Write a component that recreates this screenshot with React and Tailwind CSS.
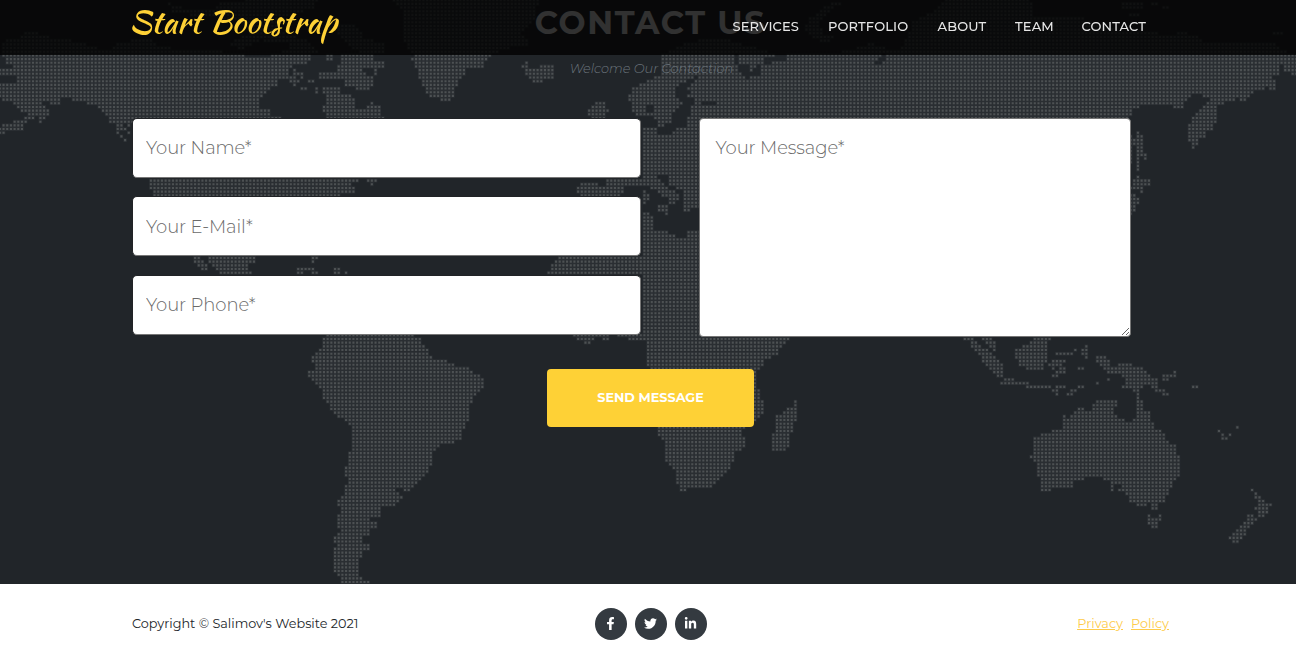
import React from "react";
import { FaFacebookF, FaTwitter, FaLinkedinIn } from "react-icons/fa";

// The dotted map is kept as sheets. Every sheet has an origin in pixels and
// outlines drawn at three units per pixel.
const SHEETS = [
  {
    o: [0, 0],
    land: [
      "0,125 30,120 60,118 75,98 100,96 140,105 150,118 215,122 240,130 290,140 300,152 335,152 345,130 375,125 400,118 450,120 480,140 560,150 640,145 700,165 800,168 860,150 930,165 935,180 918,193 865,196 868,235 832,240 830,255 808,262 808,272 785,285 778,300 778,325 808,330 812,345 845,350 845,362 400,362 398,372 388,385 384,372 325,370 325,350 305,335 290,318 262,310 258,300 212,302 205,290 180,293 180,314 150,314 140,303 125,315 148,325 148,345 136,352 124,370 115,368 115,350 85,357 75,368 50,372 72,372 70,392 15,394 15,404 -9,404 -9,385 15,372 45,362 80,350 82,338 65,333 60,322 40,318 35,308 5,302 0,290 -9,290 -9,252 50,248 50,232 25,228 -9,228 -9,205 40,205 38,193 22,193 20,182 0,165",
      "1180,0 1210,30 1215,130 1240,165 1235,180 1250,215 1265,255 1280,280 1296,292 1340,303 1361,290 1371,255 1391,225 1401,205 1426,203 1446,200 1476,165 1536,140 1596,130 1566,100 1606,60 1616,0",
      "1022,160 1120,160 1125,182 1155,183 1152,205 1135,205 1125,225 1112,205 1090,200 1085,215 1115,228 1120,255 1100,270 1068,270 1068,258 1035,258 1032,240 955,238 955,218 1010,215 1012,195 1022,190",
      "964,260 1015,260 1020,275 1050,284 1064,298 1065,325 1100,322 1112,305 1120,314 1142,318 1142,345 1155,348 1152,360 978,360 978,340 968,335 964,318 980,308 978,285 968,278",
      "448,535 1078,535 1075,547 1055,550 1068,568 1065,580 1022,580 1020,592 460,592 458,572 448,568",
      "490,0 560,30 640,25 660,10 740,0 950,0 945,25 880,40 830,70 860,100 930,125 960,158 880,158 860,130 780,120 720,150 690,130 760,90 700,60 600,50 520,35",
      "1000,80 1060,70 1090,110 1150,130 1160,158 1080,158 1040,130",
    ],
    runs: [
      [353, 364, 376], [386, 386, 376], [353, 375, 387], [353, 353, 398], [386, 386, 398], [364, 364, 409], [375, 375, 420],
      [980, 993, 167], [980, 993, 177], [870, 870, 199], [881, 881, 210], [886, 908, 221], [870, 881, 232], [903, 903, 232],
      [870, 892, 243], [925, 936, 243], [881, 881, 255], [904, 915, 266], [949, 949, 266], [949, 949, 277],
      [1104, 1126, 541], [1115, 1115, 552],
    ],
  },
  {
    o: [0, 160],
    land: [
      "580,288 600,288 600,300 612,300 622,318 620,332 612,332 592,320 580,308",
      "625,288 768,288 768,308 745,310 745,328 756,335 756,345 658,345 648,330 635,318 625,308",
    ],
    runs: [
      [938, 949, 294], [938, 938, 305], [893, 938, 327], [893, 904, 338], [938, 949, 338], [1004, 1015, 327], [1004, 1015, 338], [1037, 1037, 338],
    ],
  },
  {
    o: [290, 330],
    land: [
      "108,12 372,12 375,20 395,22 395,42 405,45 418,56 414,72 430,78 432,88 470,88 475,98 495,100 497,110 540,112 548,128 570,133 585,145 582,174 572,185 560,197 548,205 545,218 537,225 537,272 527,280 525,295 515,300 515,328 495,332 490,342 450,342 445,354 430,360 428,405 417,410 415,430 400,440 390,455 370,470 360,485 340,485 335,474 320,476 322,487 340,500 325,518 315,528 272,530 272,560 240,563 245,572 262,576 255,594 240,598 240,617 218,618 218,640 240,642 240,660 218,662 215,684 200,692 207,706 205,740 218,743 240,752 240,768 165,768 150,748 140,735 130,715 130,652 142,650 140,642 130,638 130,620 140,608 152,606 150,596 140,592 140,555 152,550 152,535 140,528 140,508 162,492 162,465 175,460 173,448 163,438 163,408 175,405 175,365 186,360 185,292 170,278 150,262 130,250 118,240 118,222 97,210 97,180 80,168 62,152 53,140 53,122 75,120 75,98 64,95 64,76 80,62 95,50 100,40 97,25",
    ],
  },
  {
    o: [432, 0],
    land: [
      "267,193 280,182 288,186 292,202 315,205 318,193 360,193 367,210 365,235 340,238 318,250 300,245 285,230 280,212 267,204",
      "466,325 488,318 490,304 520,304 520,322 532,328 518,340 518,356 478,356 466,345",
      "690,165 730,145 760,130 810,118 860,112 900,122 950,140 1000,150 1020,160 1060,165 1090,160 1130,165 1200,160 1260,150 1316,130 1356,140 1376,155 1406,150 1446,60 1506,30 1536,0 1796,0 1806,50 1856,55 1956,55 1996,75 2056,90 2146,92 2196,105 2256,95 2296,110 2326,130 2396,125 2476,125 2526,130 2556,150 2600,168 2600,225 2580,222 2576,212 2558,215 2554,198 2545,198 2541,222 2524,228 2524,238 2533,243 2532,270 2510,270 2505,262 2498,272 2468,272 2464,282 2451,292 2446,303 2426,303 2414,292 2399,304 2378,305 2375,315 2356,318 2355,368 2344,375 2342,392 2321,398 2320,412 2299,420 2297,435 2284,448 2278,432 2268,422 2268,373 2279,368 2279,350 2290,340 2302,325 2314,318 2325,305 2336,296 2350,292 2312,293 2310,280 2281,283 2264,298 2257,325 2224,325 2220,312 2190,317 2126,315 2124,325 2102,325 2096,345 2086,350 2086,362 805,362 805,648 626,648 626,345 612,348 598,332 598,305 588,300 588,284 602,262 640,246 655,235 685,220 685,190",
      "1120,95 1125,60 1160,40 1180,15 1240,0 1210,20 1160,70 1180,110 1210,110 1185,130 1140,110",
    ],
    water: [
      "735,262 745,248 762,250 765,270 772,275 765,290 785,298 788,312 775,320 778,345 765,352 765,378 740,380 722,395 705,402 675,402 672,384 658,380 655,350 675,358 677,382 698,382 700,372 720,372 720,350 728,330 748,318 748,300 735,290",
      "645,316 665,316 665,336 645,336",
      "808,303 855,303 855,316 808,316",
      "760,248 775,240 795,228 802,234 788,246 770,262",
      "920,198 950,198 945,218 962,216 960,203 990,195 990,224 965,228 950,236 935,225 920,215",
      "1030,158 1065,158 1065,185 1030,185",
      "912,165 922,165 922,193 912,193",
      "990,174 1030,174 1030,186 994,192",
      "1326,183 1346,170 1356,158 1364,158 1364,182 1346,192 1326,194",
      "626,345 640,345 655,360 655,386 640,378 626,372",
    ],
  },
  {
    o: [432, 160],
    land: [
      "520,56 630,56 630,75 592,77 578,80 578,98 555,110 443,110 433,98 433,78 443,68 498,68 502,78 520,75",
      "626,0 803,0 803,545 643,545 643,540 590,542 588,530 555,530 555,520 626,520",
      "380,288 630,288 630,345 343,345 343,334 356,322 368,300",
      "425,520 530,520 530,542 512,542 510,530 490,530 488,542 465,552 458,552 445,542 430,540",
    ],
    water: [
      "625,76 640,78 672,88 680,100 690,112 708,112 710,132 728,132 732,122 742,120 742,100 730,90 705,86 698,74 700,62 712,78 750,88 755,105 755,155 775,155 778,145 803,145 803,212 765,212 758,230 735,236 725,222 705,212 665,210 662,200 665,180 655,160 625,155",
      "675,44 697,44 712,54 708,68 695,66 676,54",
    ],
    runs: [
      [638, 638, 94], [638, 649, 105], [638, 649, 116], [638, 638, 127], [683, 705, 140], [683, 705, 151], [705, 705, 162],
      [688, 710, 97], [694, 738, 105], [716, 738, 116], [716, 727, 127],
    ],
  },
  {
    o: [540, 330],
    land: [
      "320,-10 752,15 752,28 740,42 722,58 712,74 692,86 670,94 662,118 650,122 650,175 660,178 662,208 672,210 672,252 660,262 650,275 640,285 617,290 605,302 605,318 617,322 617,352 605,362 585,365 583,395 572,408 560,428 548,442 528,462 505,474 440,475 438,486 420,486 418,468 408,462 408,420 395,415 385,405 375,385 375,335 364,328 353,308 353,290 335,180 335,118 320,110",
      "762,208 772,208 772,274 760,280 758,307 750,312 748,352 738,362 696,362 696,310 708,305 708,255 730,252 732,244 740,242 742,232 762,230",
    ],
  },
  {
    o: [864, 0],
    land: [
      "798,405 805,405 808,413 818,413 818,394 826,394 828,405 838,405 838,457 849,460 849,480 840,480 838,470 828,470 827,512 818,512 818,438 805,438 805,490 798,490",
      "807,536 860,536 860,557 807,557",
      "798,582 815,582 815,592 827,594 827,612 815,615 815,635 804,648 798,648",
      "765,8 835,8 835,25 775,25",
      "865,8 910,16 910,25 865,16",
      "795,40 830,40 830,50 795,50",
      "1225,95 1270,95 1240,110",
      "1130,125 1140,125 1140,140 1090,140",
    ],
    runs: [[822, 822, 530], [800, 833, 563], [833, 833, 575]],
  },
  {
    o: [864, 300],
    land: [
      "298,112 330,112 340,122 350,142 375,145 385,156 405,176 418,188 418,232 400,232 386,215 363,192 353,188 353,170 340,162 320,142 318,125 298,122",
      "353,112 385,112 388,122 397,124 397,155 386,155 386,145 375,142 370,132 353,122",
      "408,245 420,243 420,233 452,233 452,243 497,245 497,256 562,256 562,266 485,266 485,255 408,255",
      "508,112 562,112 562,122 552,125 552,180 540,188 540,200 528,211 485,211 485,200 463,198 463,180 453,178 453,145 475,143 475,134 497,132 497,122 508,122",
      "697,167 727,167 730,178 740,180 742,198 762,200 762,189 805,189 808,200 838,200 840,210 850,212 850,222 862,223 864,233 882,233 882,265 902,267 905,277 917,278 917,288 895,288 893,278 873,276 872,266 860,264 860,254 840,256 840,266 828,268 828,298 838,300 838,332 860,334 860,365 870,366 872,387 893,388 895,399 905,400 905,420 915,422 917,432 927,432 938,443 938,465 949,465 949,530 938,532 936,543 925,545 925,564 915,566 915,584 905,588 905,608 882,610 882,630 862,630 860,608 848,608 848,620 818,620 816,608 797,608 795,588 785,586 783,576 762,576 765,564 775,555 760,552 750,564 748,576 740,576 740,543 718,543 718,532 663,532 661,543 630,543 628,554 617,565 562,565 562,576 530,576 519,563 530,552 530,532 519,530 519,488 508,486 497,475 497,465 508,465 508,410 528,408 530,399 562,398 564,388 597,388 597,345 607,345 609,355 619,345 630,343 630,333 640,332 640,322 661,322 663,332 685,332 685,312 697,310 697,299 762,299 762,320 750,322 750,342 762,345 765,354 785,355 785,365 805,365 805,355 818,354 818,275 805,275 805,266 775,266 775,256 785,254 783,232 773,232 773,221 730,221 728,210 718,210 708,198 697,188",
    ],
    runs: [
      [578, 600, 261], [567, 578, 272], [578, 578, 283], [611, 622, 283], [622, 633, 272], [644, 655, 261],
      [578, 622, 161], [633, 633, 150], [567, 600, 183], [556, 589, 194], [567, 567, 205], [589, 600, 205], [578, 600, 216], [567, 578, 227],
      [667, 667, 139], [656, 667, 150], [656, 667, 161], [667, 667, 172], [644, 655, 205], [733, 733, 238], [700, 700, 249],
      [900, 933, 227], [933, 933, 216], [900, 911, 238], [989, 1000, 261],
      [1065, 1065, 393], [1076, 1076, 404], [1076, 1087, 415], [1098, 1098, 404], [1120, 1120, 382],
      [856, 856, 648], [889, 889, 648], [856, 889, 659], [856, 878, 670], [867, 878, 682],
      [1164, 1164, 570], [1175, 1175, 581], [1175, 1186, 592], [1186, 1197, 603], [1186, 1219, 614], [1175, 1208, 625], [1186, 1208, 636], [1186, 1197, 648],
      [1153, 1164, 648], [1153, 1175, 659], [1142, 1164, 670], [1131, 1153, 681], [1120, 1142, 692], [1109, 1142, 703], [1098, 1131, 714], [1109, 1120, 725],
    ],
  },
];

const PITCH = 3.683;
const X0 = 3.46;
const Y0 = 0.05;

function inside(poly, x, y) {
  let hit = false;
  for (let i = 0, j = poly.length - 1; i < poly.length; j = i++) {
    const [xi, yi] = poly[i];
    const [xj, yj] = poly[j];
    if (yi > y !== yj > y && x < ((xj - xi) * (y - yi)) / (yj - yi) + xi) hit = !hit;
  }
  return hit;
}

function buildDots() {
  const shapes = (key) =>
    SHEETS.flatMap(({ o, [key]: list = [] }) =>
      list.map((s) =>
        s.split(" ").map((p) => {
          const [x, y] = p.split(",").map(Number);
          return [x / 3 + o[0], y / 3 + o[1]];
        })
      )
    );
  const land = shapes("land");
  const water = shapes("water");
  const on = new Set();
  for (let r = 0; r < 159; r++) {
    for (let c = -1; c < 352; c++) {
      const x = X0 + c * PITCH;
      const y = Y0 + r * PITCH;
      if (land.some((p) => inside(p, x, y)) && !water.some((p) => inside(p, x, y))) on.add(`${c},${r}`);
    }
  }
  for (const { o, runs = [] } of SHEETS) {
    for (const [a, b, y] of runs) {
      const r = Math.round((y / 3 + o[1] - Y0) / PITCH);
      const c0 = Math.round((a / 3 + o[0] - X0) / PITCH);
      const c1 = Math.round((b / 3 + o[0] - X0) / PITCH);
      for (let c = c0; c <= c1; c++) on.add(`${c},${r}`);
    }
  }
  return [...on].map((k) => {
    const [c, r] = k.split(",").map(Number);
    return [X0 + c * PITCH + 0.1, Y0 + r * PITCH + 0.1];
  });
}

const DOTS = buildDots();
const squares = (s) =>
  DOTS.map(([x, y]) => `M${(x - s / 2).toFixed(2)} ${(y - s / 2).toFixed(2)}h${s}v${s}h-${s}z`).join("");
const HALO = squares(3.683);
const CORE = squares(2.1);

function WorldMap() {
  return (
    <svg className="absolute inset-0 h-full w-full" viewBox="0 0 1296 584" aria-hidden="true">
      <path d={HALO} fill="#2a2e32" />
      <path d={CORE} fill="#4d5153" />
    </svg>
  );
}

const LINKS = [
  ["Services", "w-[67px]"],
  ["Portfolio", "w-[81px]"],
  ["About", "w-[49px]"],
  ["Team", "w-[38px]"],
  ["Contact", "w-[66px]"],
];

function Navbar() {
  return (
    <header className="fixed inset-x-0 top-0 z-10 flex h-[55px] items-start justify-between bg-[#020202d0] pr-[148.5px] pl-[129px]">
      <a href="#top" className="pt-[2px] pr-2 font-['Kaushan_Script',cursive] text-[32px] leading-[40px] whitespace-nowrap text-[#fed136]">
        Start Bootstrap
      </a>
      <nav className="flex gap-[28.5px] pt-4">
        {LINKS.map(([label, width]) => (
          <a key={label} href="#top" className={`${width} text-[13px] leading-5 font-medium tracking-[0.15px] whitespace-nowrap text-[#e6e6e6] uppercase`}>
            {label}
          </a>
        ))}
      </nav>
    </header>
  );
}

const TEXT = "block bg-white font-light text-[#212529] placeholder:text-[#6a6a6a] outline-none text-[18px] tracking-[-0.1px]";
const FIELD = `${TEXT} h-[60px] w-full rounded-[5px] border border-[#767676] border-t-[#212326] border-l-[#212326] px-[13px]`;

function Contact() {
  return (
    <section className="relative h-[584px] bg-[#212529]">
      <WorldMap />
      <div className="relative pr-[165px] pl-[132px]">
        <div className="pl-[40px] text-center">
          <h2 className="h-[55px] pt-[1px] pr-[2px] text-[32px] leading-[44px] font-bold tracking-[1.65px] text-white uppercase">Contact Us</h2>
          <h3 className="pt-1 text-[12.9px] leading-5 font-light text-[#6c757d] italic">Welcome Our Contaction</h3>
        </div>
        <form className="pt-[39px]" onSubmit={(e) => e.preventDefault()}>
          <div className="flex justify-between">
            <div className="flex w-[509px] flex-col">
              <input className={FIELD} placeholder="Your Name*" />
              <input className={`${FIELD} mt-[18px] pt-[2px]`} placeholder="Your E-Mail*" />
              <input className={`${FIELD} mt-[19px]`} placeholder="Your Phone*" />
            </div>
            <textarea className={`${TEXT} h-[219px] w-[432px] rounded border border-[#767676] px-[15.5px] py-[15.5px] leading-[27px]`} placeholder="Your Message*" />
          </div>
          <div className="flex pt-8 pl-[415px]">
            <button className="h-[58px] w-[207px] rounded bg-[#fed136] text-[12.8px] font-bold text-white uppercase">Send Message</button>
          </div>
        </form>
      </div>
    </section>
  );
}

const SOCIAL = [FaFacebookF, FaTwitter, FaLinkedinIn];

function Footer() {
  return (
    <footer className="flex h-16 items-center bg-white pt-[15px] pr-[127px] pl-[132px] text-[12.8px] text-[#212529]">
      <p className="w-[463px]">Copyright © Salimov's Website 2021</p>
      <div className="flex gap-2">
        {SOCIAL.map((Icon, i) => (
          <a key={i} href="#top" className="flex size-8 items-center justify-center rounded-full bg-[#343a40] pr-px pb-px text-[13px] text-white">
            <Icon />
          </a>
        ))}
      </div>
      <div className="ml-auto flex gap-2 text-[#fecb4a] underline">
        <a href="#top">Privacy</a>
        <a href="#top">Policy</a>
      </div>
    </footer>
  );
}

export default function App() {
  return (
    <div className="h-[648px] overflow-hidden font-['Montserrat','Inter',sans-serif]">
      <Navbar />
      <Contact />
      <Footer />
    </div>
  );
}
